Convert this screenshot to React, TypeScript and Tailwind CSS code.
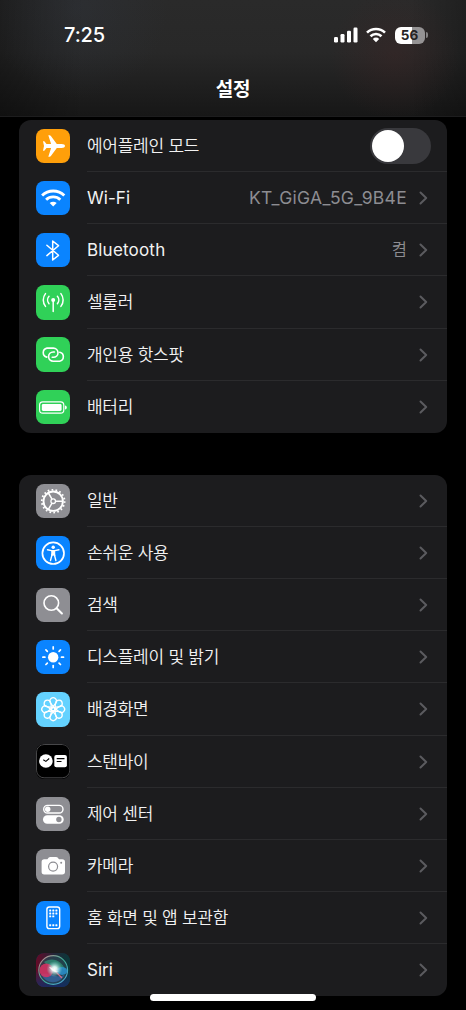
import React from "react";

type Row = {
  label: string;
  icon: React.ReactNode;
  bg: string;
  value?: string;
  toggle?: boolean;
  text?: string;
};

const PlaneIcon = () => (
  <path
    fill="#fff"
    d="M29 17c0-1.200-1.500-1.900-3.200-1.900h-5L14.900 7c-.4-.5-.8-.7-1.300-.7h-1.300l2.800 8.800H10.500L8.300 12.300H7L8 17l-1 4.700h1.300l2.200-2.800h4.600l-2.800 8.800h1.300c.5 0 .9-.2 1.300-.7l5.900-8.100h5c1.700 0 3.200-.7 3.200-1.900z"
  />
);

const WifiIcon = () => (
  <g fill="none" stroke="#fff" strokeWidth="2.900">
    <path d="M6.100 14.500a16 16 0 0 1 22.200 0" />
    <path d="M10.100 18.700a10.300 10.300 0 0 1 14.200 0" />
    <path d="M17.200 25.600l-3.500-3.500a5 5 0 0 1 7 0z" fill="#fff" stroke="none" />
  </g>
);

const BluetoothIcon = () => (
  <path
    d="M10.900 12.200L22.500 22.300L16.700 27V8L22.500 12.700L10.900 22.600"
    fill="none"
    stroke="#fff"
    strokeWidth="1.500"
    strokeLinejoin="round"
    strokeLinecap="round"
  />
);

const CellularIcon = () => (
  <g fill="none" stroke="#fff" strokeWidth="1.500" strokeLinecap="round">
    <circle cx="17.200" cy="15" r="2" fill="#fff" stroke="none" />
    <path d="M17.200 15v11.500" />
    <path d="M13 11.300a5.600 5.600 0 0 0 0 7.400M21.400 11.300a5.600 5.600 0 0 1 0 7.400" />
    <path d="M9.500 8.600a10.300 10.300 0 0 0 0 12.800M24.900 8.600a10.300 10.300 0 0 1 0 12.800" />
  </g>
);

const LinkIcon = () => (
  <g fill="none" stroke="#fff" strokeWidth="1.600" strokeLinecap="round">
    <path d="M10.800 20.100a4.600 4.600 0 0 1 .2-9h6.400a4.600 4.600 0 0 1 0 9.200h-1.200" />
    <path d="M23.800 15.200a4.600 4.600 0 0 1-.2 9h-6.400a4.600 4.600 0 0 1 0-9.200h1.200" />
  </g>
);

const BatteryIcon = () => (
  <g>
    <rect x="3.600" y="11.900" width="24.200" height="11.200" rx="3.200" fill="none" stroke="#fff" strokeWidth="1.200" />
    <rect x="5.800" y="14" width="19.800" height="7" rx="1.400" fill="#fff" />
    <path d="M29 15.500c1.200.3 1.800 1.100 1.800 2s-.6 1.700-1.800 2z" fill="#fff" />
  </g>
);

const GearIcon = () => (
  <g fill="none" stroke="#fff">
    <circle cx="17.200" cy="17.200" r="11.400" strokeWidth="1.800" strokeDasharray="1.700 2.279" />
    <circle cx="17.200" cy="17.200" r="9.700" strokeWidth="1.900" />
    <circle cx="17.200" cy="17.200" r="2.300" strokeWidth="1.300" />
    <path d="M19.500 17.200h7.200M16 15.200l-3.600-6.200M16 19.200l-3.600 6.200" strokeWidth="1.500" />
  </g>
);

const AccessibilityIcon = () => (
  <g fill="none" stroke="#fff">
    <circle cx="17.200" cy="17.200" r="10.800" strokeWidth="1.700" />
    <circle cx="17.200" cy="11.300" r="1.700" fill="#fff" stroke="none" />
    <path
      d="M11.500 13.800l4 .8h3.400l4-.8M16.100 18.500l-1.600 6M18.300 18.500l1.600 6"
      strokeWidth="1.400"
      strokeLinecap="round"
    />
    <path d="M15.200 14.200h4v3.200l.2 2.600-2.200-.6-2.200.6.200-2.600z" fill="#fff" stroke="none" />
  </g>
);

const SearchIcon = () => (
  <g fill="none" stroke="#fff">
    <circle cx="15.300" cy="15" r="7.300" strokeWidth="1.600" />
    <path d="M20.600 20.300l5.300 5.100" strokeWidth="2.100" strokeLinecap="round" />
  </g>
);

const SunIcon = () => (
  <g stroke="#fff" strokeWidth="1.700" strokeLinecap="round">
    <circle cx="17.200" cy="17.200" r="5.200" fill="#fff" stroke="none" />
    {[0, 45, 90, 135, 180, 225, 270, 315].map((a) => (
      <path key={a} d="M17.200 8.900v-2" transform={`rotate(${a} 17.2 17.2)`} />
    ))}
  </g>
);

const FlowerIcon = () => (
  <g fill="none" stroke="#fff" strokeWidth="1.300">
    {[0, 45, 90, 135, 180, 225, 270, 315].map((a) => (
      <path
        key={a}
        d="M15.400 17.200C15.400 15.200 19 13.500 20 10.800a3.300 3.300 0 1 0-5.600 0C15.400 13.500 19 15.200 19 17.200"
        transform={`rotate(${a} 17.2 17.2)`}
      />
    ))}
  </g>
);

const StandbyIcon = () => (
  <g>
    <rect x=".5" y=".5" width="33.300" height="33.300" rx="7.600" fill="#000" stroke="#48484a" strokeWidth="1" />
    <circle cx="9.900" cy="17" r="6.800" fill="#fff" />
    <path d="M7.300 15.700l2.600 1.700 3.300-2.900" fill="none" stroke="#000" strokeWidth="1.100" />
    <rect x="18.300" y="11" width="12.600" height="12.200" rx="2" fill="#fff" />
    <path d="M20.700 14.700h7.800M20.700 17.500h4.800" stroke="#000" strokeWidth="1.200" />
  </g>
);

const ControlIcon = () => (
  <g>
    <rect x="7.700" y="8.400" width="19.300" height="7.600" rx="3.800" fill="none" stroke="#fff" strokeWidth="1.400" />
    <circle cx="11.700" cy="12.200" r="2.700" fill="#fff" />
    <rect x="7" y="18.300" width="20.700" height="8.500" rx="4.250" fill="#fff" />
    <circle cx="22.900" cy="22.550" r="2.700" fill="#8e8e93" />
  </g>
);

const CameraIcon = () => (
  <g>
    <path
      d="M8.200 10.300h3.200l1.400-1.700c.4-.5.800-.7 1.500-.7h5.800c.7 0 1.100.2 1.500.7l1.400 1.700h3.200c1.900 0 2.800.9 2.800 2.700v9.800c0 1.800-.9 2.700-2.800 2.700h-18c-1.700 0-2.600-.9-2.600-2.700V13c0-1.800.9-2.700 2.600-2.700z"
      fill="#fff"
    />
    <circle cx="17.100" cy="17.600" r="4.500" fill="none" stroke="#8e8e93" strokeWidth="1.200" />
    <circle cx="25.200" cy="13.800" r="1" fill="#8e8e93" />
  </g>
);

const HomeIcon = () => (
  <g>
    <rect x="10.900" y="6" width="12.800" height="21.600" rx="2.400" fill="none" stroke="#fff" strokeWidth="1.400" />
    <g fill="#fff">
      {[8.6, 11.5, 14.4].map((y) =>
        [13.2, 16.3, 19.4].map((x) =>
          y === 14.4 && x === 19.4 ? null : <rect key={`${x}-${y}`} x={x} y={y} width="2" height="1.900" rx=".4" />
        )
      )}
      <rect x="13.200" y="23.300" width="2" height="1.900" rx=".4" />
      <rect x="16.300" y="23.300" width="2" height="1.900" rx=".4" />
      <rect x="19.400" y="23.300" width="2" height="1.900" rx=".4" />
    </g>
  </g>
);

const SiriIcon = () => (
  <g>
    <defs>
      <linearGradient id="siriBase" x1="0" y1="0" x2="1" y2="0">
        <stop offset="0" stopColor="#650b28" />
        <stop offset=".5" stopColor="#252438" />
        <stop offset="1" stopColor="#083a3a" />
      </linearGradient>
      <linearGradient id="siriLow" x1="0" y1="0" x2="0" y2="1">
        <stop offset=".5" stopColor="#133a74" stopOpacity="0" />
        <stop offset="1" stopColor="#172a64" stopOpacity=".9" />
      </linearGradient>
      <linearGradient id="siriRing" x1="0" y1="0" x2="1" y2="1">
        <stop offset="0" stopColor="#d0848d" />
        <stop offset=".5" stopColor="#3cad94" />
        <stop offset="1" stopColor="#53a6e2" />
      </linearGradient>
      <radialGradient id="siriGlow">
        <stop offset="0" stopColor="#fff" />
        <stop offset=".3" stopColor="#ecfffb" stopOpacity=".9" />
        <stop offset="1" stopColor="#7cd8d4" stopOpacity="0" />
      </radialGradient>
    </defs>
    <rect width="34.300" height="34.300" rx="8" fill="url(#siriBase)" />
    <rect width="34.300" height="34.300" rx="8" fill="url(#siriLow)" />
    <circle cx="17.200" cy="17" r="14.400" fill="#2a4f58" fillOpacity=".6" stroke="url(#siriRing)" strokeWidth="1.100" />
    <path d="M5 21C10 32 24 32 29 21C22 27 17 19 5 21z" fill="#3b6fb0" fillOpacity=".65" />
    <path d="M8 9C16 3 27 8 29 17C22 14 15 18 8 9z" fill="#2f9c7d" fillOpacity=".65" />
    <circle cx="10.300" cy="17.400" r="6.800" fill="#dc3163" fillOpacity=".85" />
    <ellipse cx="26" cy="18" rx="5.300" ry="3.900" fill="#2a91cf" fillOpacity=".85" />
    <path d="M18 17l8 8" stroke="#d56884" strokeWidth="1.300" />
    <circle cx="18.500" cy="16" r="8" fill="url(#siriGlow)" />
    <path d="M13 14c4 .5 5 3.500 10 5-4 .3-7-1-10-5z" fill="#fff" fillOpacity=".8" />
  </g>
);

const connectivity: Row[] = [
  { label: "에어플레인 모드", icon: <PlaneIcon />, bg: "bg-[#ff9f0a]", toggle: true },
  {
    label: "Wi-Fi",
    icon: <WifiIcon />,
    bg: "bg-[#0a84ff]",
    value: "KT_GiGA_5G_9B4E",
    text: "font-normal tracking-[0.050px]",
  },
  {
    label: "Bluetooth",
    icon: <BluetoothIcon />,
    bg: "bg-[#0a84ff]",
    value: "켬",
    text: "font-normal tracking-[0.200px]",
  },
  { label: "셀룰러", icon: <CellularIcon />, bg: "bg-[#30d158]" },
  { label: "개인용 핫스팟", icon: <LinkIcon />, bg: "bg-[#30d158]" },
  { label: "배터리", icon: <BatteryIcon />, bg: "bg-[#30d158]" },
];

const general: Row[] = [
  { label: "일반", icon: <GearIcon />, bg: "bg-[#8e8e93]" },
  { label: "손쉬운 사용", icon: <AccessibilityIcon />, bg: "bg-[#0a84ff]" },
  { label: "검색", icon: <SearchIcon />, bg: "bg-[#8e8e93]" },
  { label: "디스플레이 및 밝기", icon: <SunIcon />, bg: "bg-[#0a84ff]" },
  { label: "배경화면", icon: <FlowerIcon />, bg: "bg-[#64d2ff]" },
  { label: "스탠바이", icon: <StandbyIcon />, bg: "bg-black" },
  { label: "제어 센터", icon: <ControlIcon />, bg: "bg-[#8e8e93]" },
  { label: "카메라", icon: <CameraIcon />, bg: "bg-[#8e8e93]" },
  { label: "홈 화면 및 앱 보관함", icon: <HomeIcon />, bg: "bg-[#0a84ff]" },
  { label: "Siri", icon: <SiriIcon />, bg: "bg-[#1d2840]", text: "font-normal tracking-normal" },
];

function Chevron() {
  return (
    <svg className="ml-3 mr-[19px] h-[14px] w-[9px]" viewBox="0 0 9 14" fill="none">
      <path d="M1.500 1.500L7.200 7L1.500 12.500" stroke="#5b5b5f" strokeWidth="2" strokeLinecap="round" strokeLinejoin="round" />
    </svg>
  );
}

function SettingsRow({ row, last }: { row: Row; last: boolean }) {
  return (
    <div className="flex h-[52.150px] pl-[17px]">
      <div className={`mt-[8.900px] h-[34.300px] w-[34.300px] shrink-0 overflow-hidden rounded-[8px] ${row.bg}`}>
        <svg className="h-full w-full" viewBox="0 0 34.3 34.3">
          {row.icon}
        </svg>
      </div>
      <div
        className={`ml-[16.700px] flex flex-1 items-center border-b pt-[1px] ${last ? "border-transparent" : "border-[#2b2b2d]"}`}
      >
        <span
          className={`flex-1 whitespace-nowrap text-[17px] leading-6 text-[#f2f2f2] ${row.text ?? "font-[350] tracking-[-0.260px]"}`}
        >
          {row.label}
        </span>
        {row.value && (
          <span
            className={`whitespace-nowrap leading-6 text-[#8d8d92] ${row.value === "켬" ? "text-[16.500px] font-[350]" : "text-[17.500px] tracking-[0.300px]"}`}
          >
            {row.value}
          </span>
        )}
        {row.toggle ? (
          <div className="mr-4 flex h-9 w-[61px] items-center rounded-full bg-[#39393d] pl-[2px]">
            <div className="h-8 w-8 rounded-full bg-white" />
          </div>
        ) : (
          <Chevron />
        )}
      </div>
    </div>
  );
}

function Group({ rows }: { rows: Row[] }) {
  return (
    <div className="mx-[19px] overflow-hidden rounded-[12px] bg-[#1c1c1e]">
      {rows.map((row, i) => (
        <SettingsRow key={row.label} row={row} last={i === rows.length - 1} />
      ))}
    </div>
  );
}

function StatusBar() {
  return (
    <div className="flex h-[70px] items-center justify-between pl-[64px] pr-[38px]">
      <span className="text-[20px] font-[550] leading-6 tracking-[-0.100px] text-white">7:25</span>
      <div className="flex items-center">
        <svg className="h-4 w-6" viewBox="0 0 24 16" fill="#fff">
          <rect x="0" y="10" width="4" height="5.500" rx="1.200" />
          <rect x="6.500" y="7" width="4" height="8.500" rx="1.200" />
          <rect x="13" y="3.700" width="4" height="11.800" rx="1.200" />
          <rect x="19.500" y=".5" width="4" height="15" rx="1.200" />
        </svg>
        <svg className="ml-2 h-4 w-5" viewBox="0 0 20 16" fill="none" stroke="#fff" strokeWidth="2.600">
          <path d="M1 5.600a12.900 12.900 0 0 1 18 0" />
          <path d="M4.500 9.200a8 8 0 0 1 11 0" />
          <path d="M10 15.200l-3.200-3.300a4.600 4.600 0 0 1 6.400 0z" fill="#fff" stroke="none" />
        </svg>
        <div className="ml-[9px] flex h-[17px] w-[30px] items-center justify-center rounded-[6px] bg-[linear-gradient(90deg,#fff_56%,#959394_56%)] pr-px text-[13.500px] font-bold leading-[17px] text-[#262424]">
          56
        </div>
        <div className="ml-px h-[6px] w-[2px] rounded-r-full bg-[#858384]" />
      </div>
    </div>
  );
}

function App() {
  return (
    <div className="relative flex h-[1010px] w-[466px] flex-col overflow-hidden bg-black font-['Inter','Noto_Sans_CJK_KR',sans-serif]">
      {/* Navbar */}
      <div className="h-[116.500px] shrink-0 border-b border-[#1d1d1e] bg-[radial-gradient(circle_at_78px_8px,#30364059,transparent_90px),radial-gradient(circle_at_395px_55px,#43252559,transparent_65px),linear-gradient(90deg,#00000050,transparent_18%,transparent_88%,#00000040),linear-gradient(180deg,#2a2a2a,#282828_45%,#171717)]">
        <StatusBar />
        <div className="mt-[8px] text-center text-[19px] font-semibold leading-6 tracking-[-0.200px] text-white">설정</div>
      </div>
      {/* Settings list */}
      <div className="flex flex-col gap-[42px] pt-[3.500px]">
        <Group rows={connectivity} />
        <Group rows={general} />
      </div>
      {/* Home indicator */}
      <div className="absolute left-[150px] top-[994px] h-[7px] w-[166px] rounded-full bg-white" />
    </div>
  );
}

export default App;
